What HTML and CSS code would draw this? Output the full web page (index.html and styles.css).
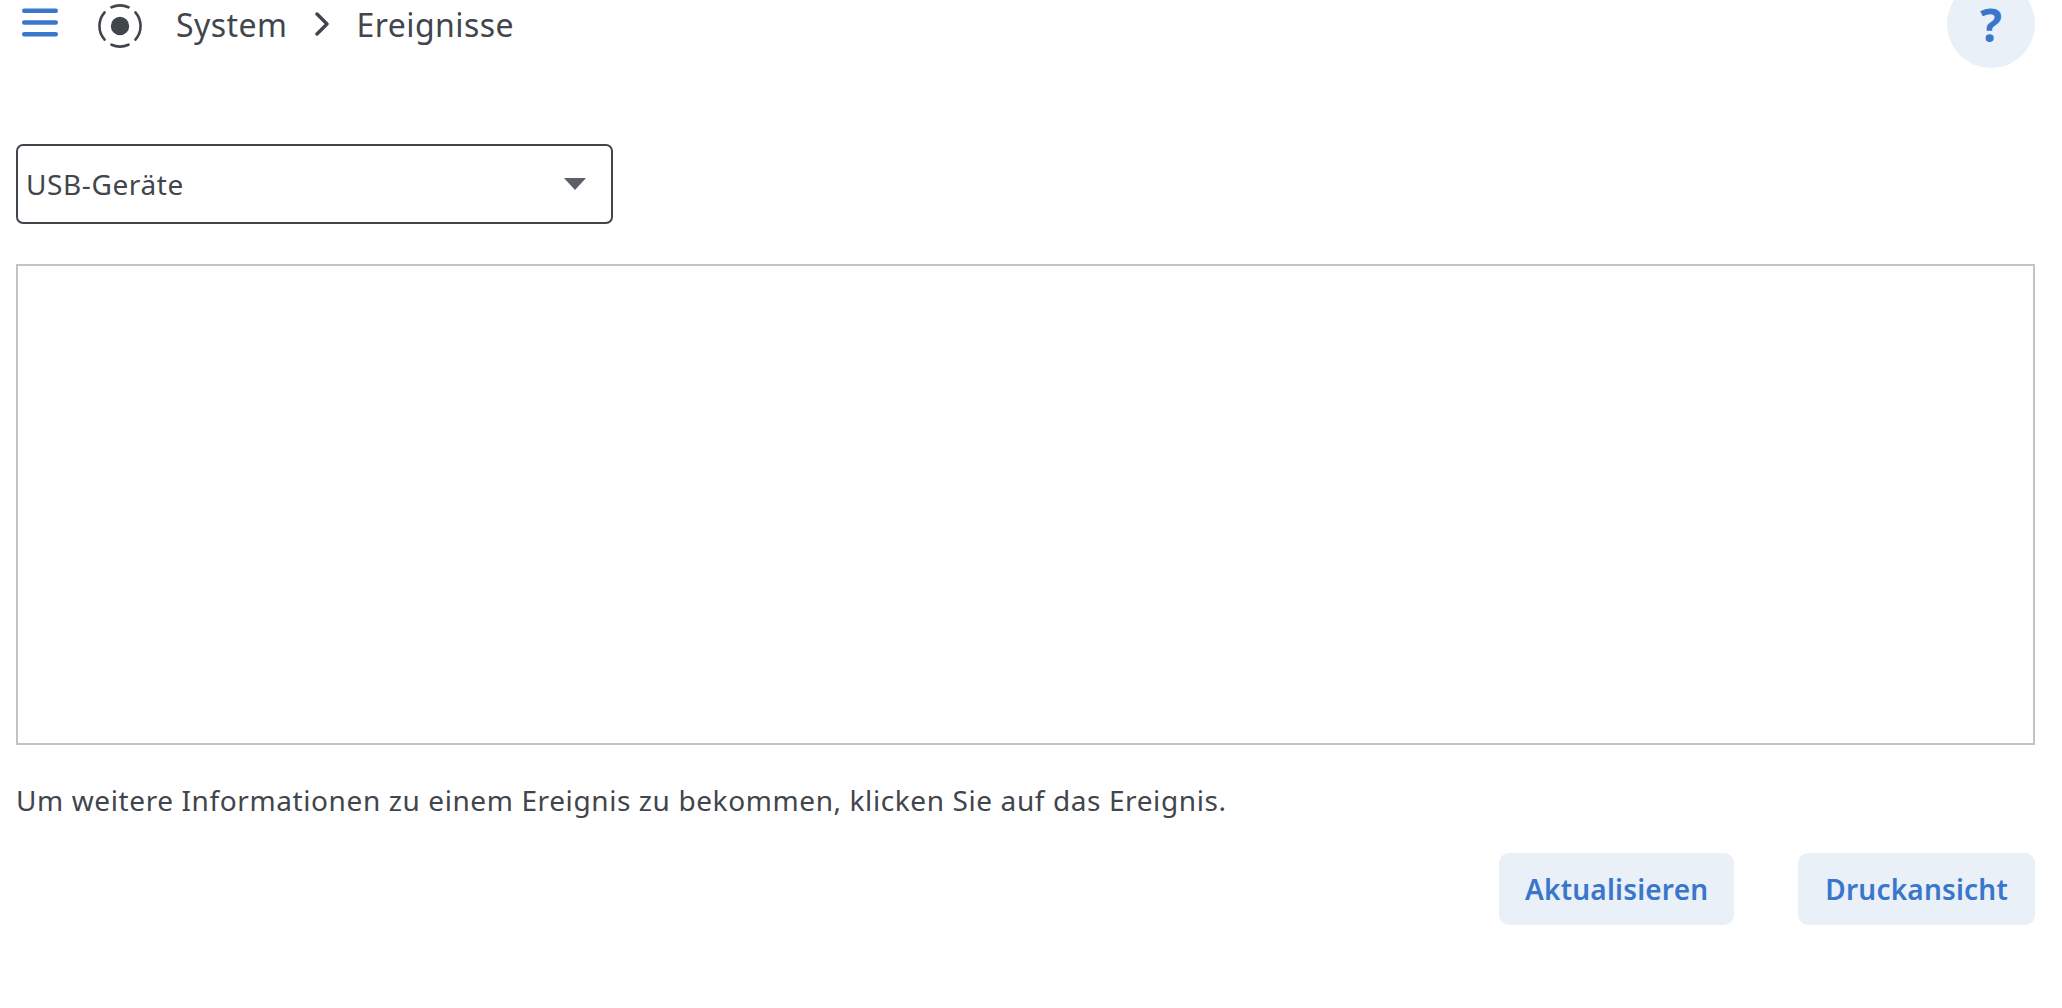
FILE: index.html
```html
<!DOCTYPE html>
<html lang="de">
<head>
  <meta charset="UTF-8">
  <meta name="viewport" content="width=device-width, initial-scale=1.0">
  <title>System - Ereignisse</title>
  <link rel="stylesheet" href="styles.css">
</head>
<body>

  <header class="topbar">
    <button class="menu-btn" aria-label="Menü">
      <svg width="36" height="29" viewBox="0 0 36 29">
        <rect x="0" y="0.500" width="36" height="4.400" rx="2.200"/>
        <rect x="0" y="12.300" width="36" height="4.400" rx="2.200"/>
        <rect x="0" y="24.100" width="36" height="4.400" rx="2.200"/>
      </svg>
    </button>
    <svg class="page-icon" width="44" height="44" viewBox="0 0 44 44">
      <circle cx="22" cy="22" r="9.200"/>
      <path class="ring" d="M6.600 8.400A20.500 20.500 0 0 0 6.600 35.600"/>
      <path class="ring" d="M37.400 8.400A20.500 20.500 0 0 1 37.400 35.600"/>
      <path class="ring" d="M13.500 3.300A20.500 20.500 0 0 1 30.500 3.300"/>
      <path class="ring" d="M13.500 40.700A20.500 20.500 0 0 0 30.500 40.700"/>
    </svg>
    <nav class="crumbs">
      <span>System</span>
      <svg class="crumb-sep" width="16" height="24" viewBox="0 0 16 24"><path d="M3 2l10 10-10 10"/></svg>
      <span>Ereignisse</span>
    </nav>
    <button class="help-btn" aria-label="Hilfe">?</button>
  </header>

  <main class="content">
    <div class="select-box">
      <span>USB-Geräte</span>
      <span class="select-arrow"></span>
    </div>

    <div class="event-frame"></div>

    <p class="hint">Um weitere Informationen zu einem Ereignis zu bekommen, klicken Sie auf das Ereignis.</p>

    <div class="actions">
      <button class="action-btn">Aktualisieren</button>
      <button class="action-btn print-btn">Druckansicht</button>
    </div>
  </main>

</body>
</html>
```

FILE: styles.css
```css
body {
  margin: 0;
  background: #fff;
  color: #41454c;
  font-family: "Noto Sans", sans-serif;
  font-size: 28px;
  letter-spacing: 0.6px;
  overflow: hidden;
}

button {
  font-family: inherit;
  border: none;
  cursor: pointer;
}

.topbar {
  display: flex;
  align-items: center;
  height: 48px;
  padding: 0 27px 0 22px;
}

.menu-btn {
  background: none;
  padding: 0;
  width: 36px;
  height: 29px;
  margin-top: -3px;
}

.menu-btn svg {
  display: block;
  fill: #3a76cc;
}

.page-icon {
  margin: 3px 0 0 40px;
  fill: #41454c;
}

.page-icon .ring {
  fill: none;
  stroke: #41454c;
  stroke-width: 2.6;
  stroke-linecap: round;
}

.crumbs {
  display: flex;
  align-items: center;
  margin-left: 34px;
  font-size: 32px;
  letter-spacing: 0.45px;
}

.crumb-sep {
  margin: 0 26px 0 27px;
  fill: none;
  stroke: #41454c;
  stroke-width: 3.4;
  stroke-linecap: round;
  stroke-linejoin: round;
}

.help-btn {
  flex: none;
  width: 88px;
  height: 88px;
  margin-left: auto;
  padding: 0;
  border-radius: 50%;
  background: #e9f0f8;
  color: #3a76cc;
  font-size: 46px;
  font-weight: 700;
  line-height: 1;
}

.content {
  padding: 96px 27px 0 16px;
}

.select-box {
  display: flex;
  align-items: center;
  justify-content: space-between;
  box-sizing: border-box;
  width: 597px;
  height: 80px;
  padding: 0 25px 0 8px;
  border: 2px solid #41454c;
  border-radius: 7px;
}

.select-arrow {
  width: 0;
  height: 0;
  border-left: 11px solid transparent;
  border-right: 11px solid transparent;
  border-top: 12px solid #5b6068;
}

.event-frame {
  box-sizing: border-box;
  height: 481px;
  margin-top: 40px;
  border: 2px solid #c4c4bd;
}

.hint {
  margin: 36px 0 0;
  line-height: 38px;
}

.actions {
  display: flex;
  justify-content: flex-end;
  gap: 64px;
  margin-top: 34px;
}

.action-btn {
  height: 72px;
  padding: 0 26px;
  border-radius: 10px;
  background: #e9f0f8;
  color: #3a76cc;
  font-size: 28px;
  font-weight: 600;
  letter-spacing: 0.2px;
}

.print-btn {
  padding: 0 27px;
}
```
